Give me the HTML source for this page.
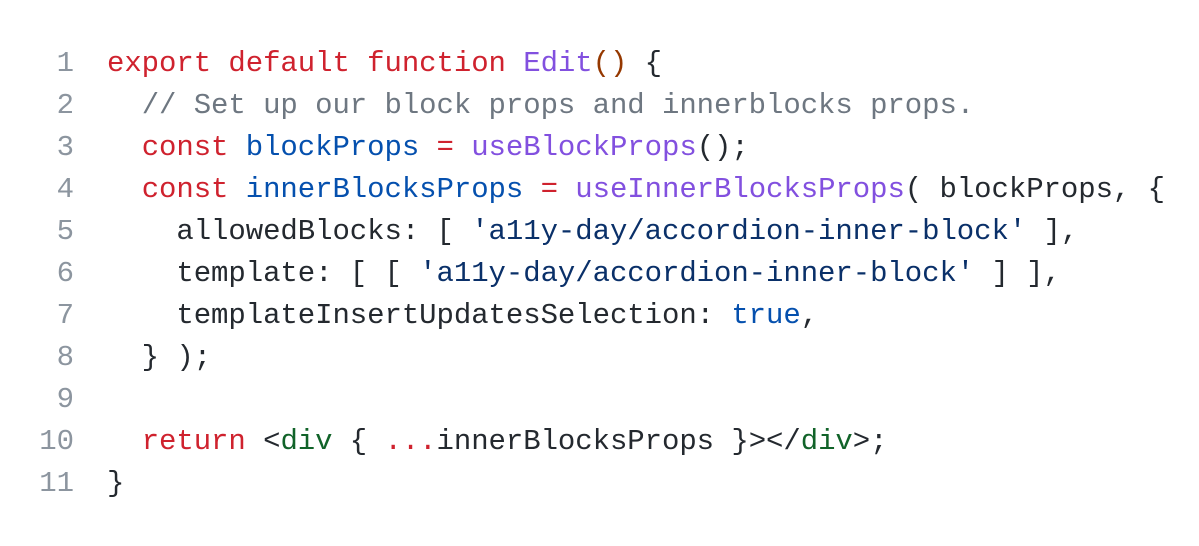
<!DOCTYPE html>
<html><head><meta charset="utf-8"><style>
html,body{margin:0;padding:0;background:#fff;width:1199px;height:546px;overflow:hidden}
.code{position:absolute;left:0;top:43px;font-family:"Liberation Mono","DejaVu Sans Mono",monospace;font-size:29px;line-height:42px;color:#24292f;white-space:pre;letter-spacing:-0.06px}
.ln{display:inline-block;width:74px;text-align:right;color:#8c959f;margin-right:33px;letter-spacing:0}
.k{color:#cf222e}.f{color:#8250df}.v{color:#0550ae}.c{color:#6e7781}.s{color:#0a3069}.g{color:#116329}.o{color:#953800}
</style></head><body><div class="code"><div><span class="ln">1</span><span class="k">export default function</span> <span class="f">Edit</span><span class="o">()</span> {</div><div><span class="ln">2</span>  <span class="c">// Set up our block props and innerblocks props.</span></div><div><span class="ln">3</span>  <span class="k">const</span> <span class="v">blockProps</span> <span class="k">=</span> <span class="f">useBlockProps</span>();</div><div><span class="ln">4</span>  <span class="k">const</span> <span class="v">innerBlocksProps</span> <span class="k">=</span> <span class="f">useInnerBlocksProps</span>( blockProps, {</div><div><span class="ln">5</span>    allowedBlocks: [ <span class="s">'a11y-day/accordion-inner-block'</span> ],</div><div><span class="ln">6</span>    template: [ [ <span class="s">'a11y-day/accordion-inner-block'</span> ] ],</div><div><span class="ln">7</span>    templateInsertUpdatesSelection: <span class="v">true</span>,</div><div><span class="ln">8</span>  } );</div><div><span class="ln">9</span></div><div><span class="ln">10</span>  <span class="k">return</span> &lt;<span class="g">div</span> { <span class="k">...</span>innerBlocksProps }&gt;&lt;/<span class="g">div</span>&gt;;</div><div><span class="ln">11</span>}</div></div></body></html>
